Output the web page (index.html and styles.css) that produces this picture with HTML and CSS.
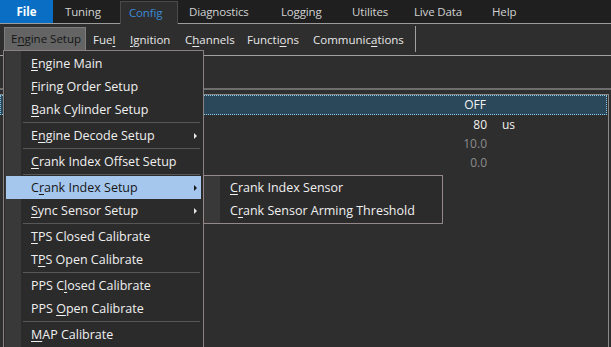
FILE: index.html
```html
<!DOCTYPE html>
<html>
<head>
<meta charset="utf-8">
<link rel="stylesheet" href="styles.css">
</head>
<body>
<div class="app">
  <header class="tabbar">
    <div class="tab t-file">File</div>
    <div class="tab t-tuning">Tuning</div>
    <div class="tab t-config">Config</div>
    <div class="tab t-diag">Diagnostics</div>
    <div class="tab t-log">Logging</div>
    <div class="tab t-util">Utilites</div>
    <div class="tab t-live">Live Data</div>
    <div class="tab t-help">Help</div>
    <div class="tab-fill"></div>
  </header>
  <nav class="ribbon">
    <div class="rb rb-engine">E<u>n</u>gine Setup</div>
    <div class="rb rb-fuel">Fue<u>l</u></div>
    <div class="rb rb-ign"><u>I</u>gnition</div>
    <div class="rb rb-chan">C<u>h</u>annels</div>
    <div class="rb rb-func">Functi<u>o</u>ns</div>
    <div class="rb rb-comm">Communic<u>a</u>tions</div>
    <div class="rb-sep"></div>
  </nav>
  <main class="content">
    <div class="spacer"></div>
    <div class="rule"></div>
    <div class="grid">
      <div class="row sel"><span class="lbl"></span><span class="val">OFF</span><span class="unit"></span></div>
      <div class="row"><span class="lbl"></span><span class="val">80</span><span class="unit">us</span></div>
      <div class="row dim"><span class="lbl"></span><span class="val">10.0</span><span class="unit"></span></div>
      <div class="row dim"><span class="lbl"></span><span class="val">0.0</span><span class="unit"></span></div>
    </div>
  </main>

  <div class="menu">
    <div class="mi"><span class="mt"><u>E</u>ngine Main</span></div>
    <div class="mi"><span class="mt"><u>F</u>iring Order Setup</span></div>
    <div class="mi"><span class="mt"><u>B</u>ank Cylinder Setup</span></div>
    <div class="msep"></div>
    <div class="mi"><span class="mt">E<u>n</u>gine Decode Setup</span><span class="arr"></span></div>
    <div class="msep"></div>
    <div class="mi"><span class="mt"><u>C</u>rank Index Offset Setup</span></div>
    <div class="msep"></div>
    <div class="mi hot"><span class="mt">C<u>r</u>ank Index Setup</span><span class="arr"></span></div>
    <div class="mi"><span class="mt"><u>S</u>ync Sensor Setup</span><span class="arr"></span></div>
    <div class="msep"></div>
    <div class="mi"><span class="mt"><u>T</u>PS Closed Calibrate</span></div>
    <div class="mi"><span class="mt">T<u>P</u>S Open Calibrate</span></div>
    <div class="msep"></div>
    <div class="mi"><span class="mt">PPS C<u>l</u>osed Calibrate</span></div>
    <div class="mi"><span class="mt">PPS <u>O</u>pen Calibrate</span></div>
    <div class="msep"></div>
    <div class="mi"><span class="mt"><u>M</u>AP Calibrate</span></div>
  </div>

  <div class="submenu">
    <div class="si"><u>C</u>rank Index Sensor</div>
    <div class="si">C<u>r</u>ank Sensor Arming Threshold</div>
  </div>
</div>
</body>
</html>
```
FILE: styles.css
```css
* { box-sizing: border-box; }
html, body { margin: 0; padding: 0; }
body {
  width: 611px;
  height: 347px;
  overflow: hidden;
  background: #2e2e2e;
  font-family: "Open Sans", "Noto Sans", sans-serif;
  font-size: 12px;
  color: #e6e6e6;
}
u { text-decoration-thickness: 1px; text-underline-offset: 2px; }
.app { position: relative; width: 611px; height: 347px; display: flex; flex-direction: column; }

/* top tab bar */
.tabbar { display: flex; height: 24px; background: #1f1f1f; flex: none; }
.tab {
  height: 24px;
  line-height: 24px;
  font-size: 11.5px;
  letter-spacing: -0.15px;
  color: #d2d2d2;
  border-bottom: 1px solid #9c9c9c;
  padding-left: 11px;
  white-space: nowrap;
  flex: none;
}
.tab-fill { flex: 1; border-bottom: 1px solid #9c9c9c; }
.t-file { width: 53px; padding-left: 0; text-align: center; background: #0a6fc4; color: #fff; font-weight: 700; line-height: 23px; letter-spacing: 0; }
.t-tuning { width: 67px; padding-left: 12px; }
.t-config {
  width: 58px; padding-left: 8px;
  margin-top: 1px; height: 23px; line-height: 22px;
  background: #2e2e2e;
  color: #3d8ad6;
  border: 1px solid #4a4a4a;
  border-bottom: none;
}
.t-diag { width: 92px; }
.t-log { width: 71px; }
.t-util { width: 62px; }
.t-live { width: 78px; }
.t-help { width: 59px; }

/* second bar */
.ribbon {
  display: flex;
  align-items: center;
  height: 32px;
  flex: none;
  background: #2e2e2e;
  border-bottom: 1px solid #a0a0a0;
  padding-bottom: 1px;
  font-size: 11.5px;
}
.rb { white-space: nowrap; color: #e8e8e8; flex: none; }
.rb-engine {
  margin-left: 4px;
  width: 82px;
  height: 24px;
  line-height: 22px;
  padding-left: 6px;
  background: #646464;
  border: 1px solid #7e7e7e;
  color: #141414;
  margin-right: 7px;
}
.rb-fuel { width: 37px; }
.rb-ign { width: 55px; }
.rb-chan { width: 62px; }
.rb-func { width: 66px; }
.rb-comm { width: 102px; }
.rb-sep { width: 1px; height: 26px; background: #a0a0a0; }

/* content */
.content { flex: 1; display: flex; flex-direction: column; }
.spacer { height: 32px; flex: none; }
.rule { height: 2px; background: #6e6e6e; margin-bottom: 4px; flex: none; }
.grid {
  width: 609px;
  border-top: 1px solid #8a8a8a;
  border-right: 1px solid #8a8a8a;
  flex: 1;
  font-size: 12px;
}
.row {
  display: grid;
  grid-template-columns: 1fr 60px 120px;
  height: 19px;
  line-height: 19px;
  color: #f2f2f2;
}
.row.sel {
  height: 20px;
  line-height: 20px;
  background: #2a4859;
  outline: 1px dotted #86cbea;
  outline-offset: -1px;
  margin-right: 1px;
}
.row.dim { color: #8c8c8c; }
.val { text-align: right; padding-right: 1px; }
.unit { padding-left: 14px; }

/* dropdown */
.menu {
  position: absolute;
  left: 3px;
  top: 50px;
  width: 201px;
  height: 310px;
  padding-top: 1px;
  background: linear-gradient(to right, #2b2b2b 1px, #393939 1px, #393939 17px, #2b2b2b 17px);
  border: 1px solid #8a8282;
  color: #f0f0f0;
  font-size: 12.5px;
}
.mi {
  display: flex;
  align-items: center;
  height: 23px;
  margin: 0 2px;
  padding-left: 25px;
  white-space: nowrap;
}
.mt { white-space: pre; }
.mi.hot { background: #a5c7ee; color: #161616; }
.msep { height: 1px; margin: 1px 3px 1px 19px; background: #575757; }
.arr {
  margin-left: auto;
  margin-right: 4px;
  width: 0; height: 0;
  border-left: 3px solid #e8e8e8;
  border-top: 3px solid transparent;
  border-bottom: 3px solid transparent;
}
.hot .arr { border-left-color: #1a1a1a; }

.submenu {
  position: absolute;
  left: 203px;
  top: 175px;
  width: 240px;
  height: 49px;
  background: linear-gradient(to right, #393939 16px, #2b2b2b 16px);
  border: 1px solid #958888;
  color: #f0f0f0;
  font-size: 12.5px;
}
.si { height: 23px; line-height: 23px; padding-left: 26px; white-space: nowrap; }
```
